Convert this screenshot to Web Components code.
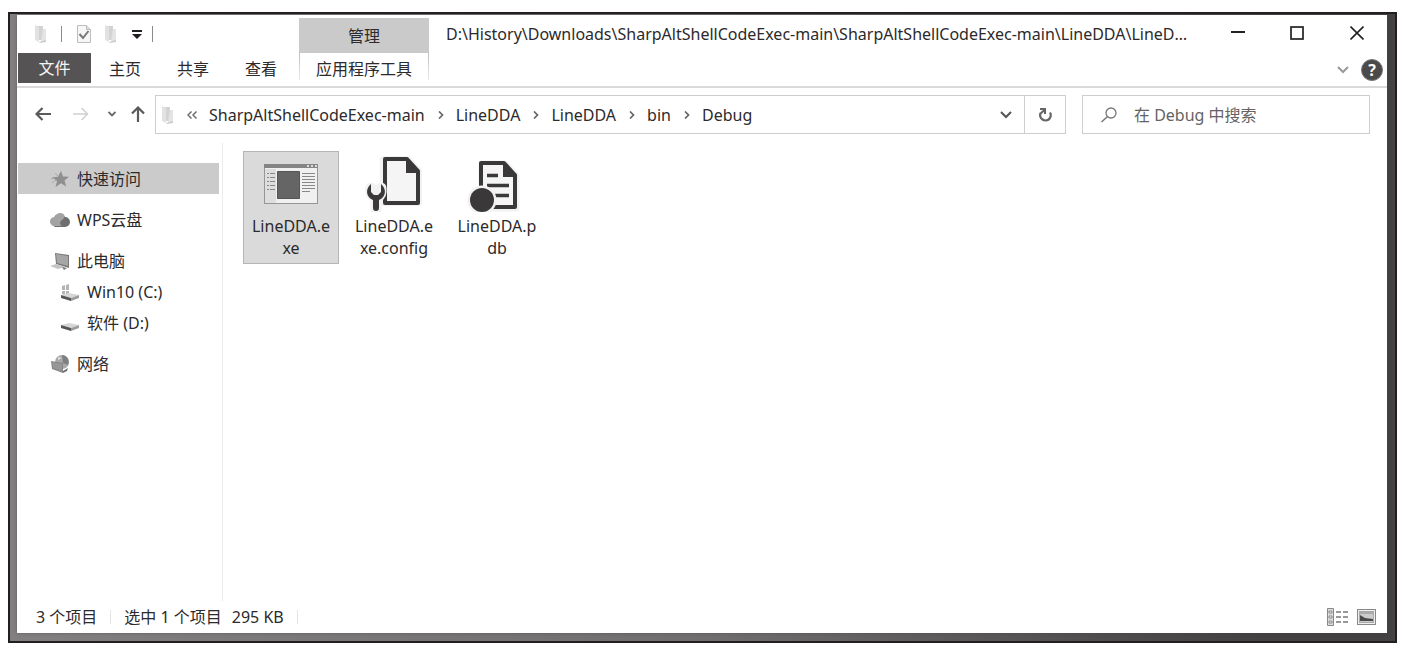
<!DOCTYPE html>
<html lang="zh-CN">
<head>
<meta charset="utf-8">
<title>Debug</title>
<style>
  html { background: #fff; }
  body {
    margin: 0; padding: 12px 7px 16px 8px; box-sizing: border-box; min-height: 100vh;
    display: flex; flex-direction: column;
    font: 16px/22px "Noto Sans", "Noto Sans CJK SC", sans-serif; color: #2c2a2b;
  }
</style>
</head>
<body>
<explorer-window>
  <title-bar slot="title" context="管理">D:\History\Downloads\SharpAltShellCodeExec-main\SharpAltShellCodeExec-main\LineDDA\LineDDA\bin\Debug</title-bar>
  <ribbon-tabs slot="ribbon"></ribbon-tabs>
  <address-bar slot="address"></address-bar>
  <nav-pane slot="nav">
    <nav-item icon="star" selected>快速访问</nav-item>
    <nav-item icon="cloud">WPS云盘</nav-item>
    <nav-item icon="pc">此电脑</nav-item>
    <nav-item icon="windrive" child>Win10 (C:)</nav-item>
    <nav-item icon="drive" child>软件 (D:)</nav-item>
    <nav-item icon="net">网络</nav-item>
  </nav-pane>
  <file-grid slot="files">
    <file-tile icon="exe" selected>LineDDA.exe</file-tile>
    <file-tile icon="config">LineDDA.exe.config</file-tile>
    <file-tile icon="pdb">LineDDA.pdb</file-tile>
  </file-grid>
  <status-bar slot="status"></status-bar>
</explorer-window>

<script>
const BASE = `
  *, *::before, *::after { box-sizing: border-box; }
  button, a, input { font: inherit; color: inherit; border: 0; padding: 0; margin: 0; background: none; text-decoration: none; border-radius: 0; }
  button, a { display: flex; align-items: center; justify-content: center; }
  svg { display: block; flex: none; }
`;

const ICONS = {
  folder: `<svg width="14" height="20" viewBox="0 0 14 20"><path d="M2 2h7v14H2z" fill="#d3d3d3"/><path d="M9 5h3v12H7z" fill="#e4e4e4"/><path d="M1 1l4 2v15l-4-2z" fill="#e2e2e2"/><path d="M5 18l7-2v2l-6 1z" fill="#ccc"/></svg>`,
  check: `<svg width="16" height="20" viewBox="0 0 16 20"><path d="M1.500 1.500h9l4 4v13h-13z" fill="#f6f6f6" stroke="#bdbdbd"/><path d="M10.500 1.500v4h4" fill="#ddd" stroke="#bdbdbd"/><path d="M3.500 10l3.500 4 5.500-7" fill="none" stroke="#777" stroke-width="2"/></svg>`,
  more: `<svg width="10" height="10" viewBox="0 0 10 10"><path d="M0 1h10v2H0zM0 5h10L5 10z" fill="#231f20"/></svg>`,
  min: `<svg width="14" height="14" viewBox="0 0 14 14"><path d="M0 6h14" stroke="#222" stroke-width="2"/></svg>`,
  max: `<svg width="14" height="14" viewBox="0 0 14 14"><rect x="1" y="1" width="12" height="12" fill="none" stroke="#222" stroke-width="1.700"/></svg>`,
  close: `<svg width="14" height="14" viewBox="0 0 14 14"><path d="M.5.5l13 13M13.500.5l-13 13" stroke="#222" stroke-width="1.600"/></svg>`,
  down: `<svg width="12" height="8" viewBox="0 0 12 8"><path d="M1 1l5 5 5-5" fill="none" stroke="currentColor" stroke-width="2"/></svg>`,
  tiny: `<svg width="8" height="6" viewBox="0 0 8 6"><path d="M.5 1L4 4.500 7.500 1" fill="none" stroke="#666" stroke-width="1.800"/></svg>`,
  back: `<svg width="16" height="14" viewBox="0 0 16 14"><path d="M7.500 1l-6 6 6 6M1.500 7H16" fill="none" stroke="#5b595a" stroke-width="2.200"/></svg>`,
  fwd: `<svg width="16" height="14" viewBox="0 0 16 14"><path d="M8.500 1l6 6-6 6M14.500 7H0" fill="none" stroke="#cfcfcf" stroke-width="1.500"/></svg>`,
  up: `<svg width="14" height="16" viewBox="0 0 14 16"><path d="M1 7.500l6-6 6 6M7 1.500V16" fill="none" stroke="#5b595a" stroke-width="2.200"/></svg>`,
  right: `<svg width="6" height="8" viewBox="0 0 6 8"><path d="M1 .5L4.500 4 1 7.500" fill="none" stroke="#666" stroke-width="1.700"/></svg>`,
  laquo: `<svg width="10" height="8" viewBox="0 0 10 8"><path d="M4.500 .5L1 4l3.500 3.500M9.500 .5L6 4l3.500 3.500" fill="none" stroke="#666" stroke-width="1.400"/></svg>`,
  refresh: `<svg width="14" height="16" viewBox="0 0 14 16"><path d="M12 5.500A5.300 5.300 0 1 1 2.600 6" fill="none" stroke="#666" stroke-width="2.200"/><path d="M2 2h5v5M7 2.500L2.500 6.500" fill="none" stroke="#666" stroke-width="2"/></svg>`,
  search: `<svg width="18" height="18" viewBox="0 0 18 18"><circle cx="11" cy="7" r="5" fill="none" stroke="#777" stroke-width="1.300"/><path d="M7.300 10.700L1.500 16" stroke="#777" stroke-width="1.500"/></svg>`,
  star: `<svg width="20" height="20" viewBox="0 0 20 20"><path d="M11 2l2 5.500 6 .2-4.500 3.800 1.700 6L11 14.200 5.500 18l1.600-6L2 8.200l6-.4z" fill="#8f8f8f"/><path d="M2 14l4-3M1 10l4-1M5 4l3 3" stroke="#aaa"/></svg>`,
  cloud: `<svg width="20" height="20" viewBox="0 0 20 20"><path d="M5 17a5 5 0 0 1-1-9 6 6 0 0 1 11-1 5 5 0 0 1 0 10z" fill="#6f6f6f"/><path d="M4 16a4.500 4.500 0 0 1 1-9 6 6 0 0 1 6-4c5 1 4 5 1 7s-2 5 0 6z" fill="#a3a3a3"/></svg>`,
  pc: `<svg width="20" height="20" viewBox="0 0 20 20"><path d="M5 2l14 2v13L6 13z" fill="#777"/><path d="M6 3l12 2v10L7 12z" fill="#a6a6a6"/><path d="M0 15l6-2 9 3-7 2z" fill="#c4c4c4"/><path d="M12 16l5 1-3 2z" fill="#777"/></svg>`,
  windrive: `<svg width="20" height="20" viewBox="0 0 20 20"><path d="M2 4l3-1v5H2zM6 3l3-1v6H6zM2 9h3v4l-3-1zM6 9h3v4H6z" fill="#b4b4b4"/><path d="M1 13l8-2 10 2-8 3z" fill="#d6d6d6"/><path d="M1 13l10 3v3L1 16z" fill="#555"/><path d="M11 16l8-3v3l-8 3z" fill="#9c9c9c"/></svg>`,
  drive: `<svg width="20" height="20" viewBox="0 0 20 20"><path d="M1 12l8-2 10 2-8 3z" fill="#d6d6d6"/><path d="M1 12l10 3v3L1 15z" fill="#555"/><path d="M11 15l8-3v3l-8 3z" fill="#9c9c9c"/></svg>`,
  net: `<svg width="20" height="20" viewBox="0 0 20 20"><circle cx="12" cy="8" r="7" fill="#a8a8a8"/><path d="M12 1a7 7 0 0 1 6 10l-5-2z" fill="#808080"/><path d="M8 3l4 1-4 2z" fill="#dedede"/><path d="M1 7l12 2v10L2 15z" fill="#858585"/><path d="M2 8l10 2v7l-9-3z" fill="#979797"/><path d="M13 17l5-3-1 3-4 2z" fill="#6f6f6f"/></svg>`,
  exe: `<svg width="60" height="60" viewBox="0 0 60 60"><rect x="3.500" y="12.500" width="53" height="39" fill="#f0f0f0" stroke="#969696"/><path d="M3 12h54v4H3z" fill="#858585"/><path d="M46 13h2v2h-2zM50 13h2v2h-2zM54 13h2v2h-2z" fill="#ddd"/><path d="M4 17h11v34H4z" fill="#dedede"/><path d="M6 21.500h8M6 25.500h8M6 29.500h8M6 33.500h8M6 37.500h8" stroke="#888" stroke-dasharray="2 1 5"/><path d="M16.500 19.500h22v27h-22z" fill="#656565" stroke="#555"/><path d="M41 21.500h13M41 24.500h13M41 27.500h13M41 30.500h13M41 33.500h13M41 36.500h13M41 39.500h8" stroke="#888"/></svg>`,
  config: `<svg width="60" height="60" viewBox="0 0 60 60"><path d="M19 7h25l11 12v32H19z" fill="#f2f2f2" stroke="#f2f2f2" stroke-width="6" stroke-linejoin="round"/><path d="M21 7h22l11 12v32H21z" fill="#f5f5f5" stroke="#3a3839" stroke-width="4" stroke-linejoin="round"/><path d="M42 6l14 15H42z" fill="#3a3839"/><path d="M7 36v4a5 5 0 0 0 10 0v-4M12 46v12" fill="none" stroke="#f2f2f2" stroke-width="11" stroke-linecap="round"/><path d="M7 32c-6 5-5 13 2 16v8a3 3 0 0 0 6 0v-8c7-3 8-11 2-16v8l-3 3h-4l-3-3z" fill="#3a3839"/></svg>`,
  pdb: `<svg width="60" height="60" viewBox="0 0 60 60"><path d="M15 12h23l11 12v32H15z" fill="#f2f2f2" stroke="#f2f2f2" stroke-width="7" stroke-linejoin="round"/><path d="M14 11h23l11 12v32H14z" fill="#f5f5f5" stroke="#3a3839" stroke-width="4" stroke-linejoin="round"/><path d="M36 10l14 15H36z" fill="#3a3839"/><path d="M20 23.500h11M20 33.500h22M28 43.500h14" stroke="#3a3839" stroke-width="3.500"/><circle cx="15" cy="48" r="14.500" fill="#f2f2f2"/><circle cx="15" cy="48" r="12" fill="#3a3839"/></svg>`,
  details: `<svg width="22" height="18" viewBox="0 0 22 18"><path d="M.5.500h6v17h-6z" fill="#ddd" stroke="#888"/><path d="M2 3h3v2H2zM2 8h3v2H2zM2 13h3v2H2z" fill="#fff" stroke="#888"/><path d="M9 4h5M16 4h5M9 9h5M16 9h5M9 14h5M16 14h5" stroke="#777" stroke-width="1.500"/></svg>`,
  thumbs: `<svg width="19" height="16" viewBox="0 0 19 16"><rect x=".5" y=".5" width="18" height="15" fill="#eee" stroke="#888"/><rect x="2.500" y="2.500" width="14" height="11" fill="#ccc" stroke="#aaa"/><path d="M3 6l5 3 8 1v2H3z" fill="#4a4a4a"/><path d="M3 4h13" stroke="#888"/></svg>`
};

function define(name, render) {
  customElements.define(name, class extends HTMLElement {
    constructor() { super(); this.attachShadow({ mode: "open" }); }
    connectedCallback() {
      const t = document.createElement("template");
      t.innerHTML = render(this);
      this.shadowRoot.replaceChildren(t.content.cloneNode(true));
    }
  });
}

define("explorer-window", () => `<style>${BASE}
  :host { display: flex; flex-direction: column; flex: 1; box-sizing: border-box; border: 2px solid #231f20;
    padding: 1px 8px 8px 7px; background: linear-gradient(90deg, #827f80, #716e6f 50%, #434142 90%); }
  .win { flex: 1; display: flex; flex-direction: column; background: #fff; box-shadow: 0 0 3px #4448; }
  .main { flex: 1; display: flex; padding-top: 4px; }
  ::slotted([slot=files]) { flex: 1; }
</style>
<div class="win">
  <slot name="title"></slot><slot name="ribbon"></slot><slot name="address"></slot>
  <div class="main"><slot name="nav"></slot><slot name="files"></slot></div>
  <slot name="status"></slot>
</div>`);

define("title-bar", el => `<style>${BASE}
  :host { display: flex; height: 38px; align-items: center; }
  .quick { width: 282px; display: flex; align-items: center; padding-left: 17px; }
  .quick button { height: 24px; }
  .quick i { width: 1px; height: 16px; background: #8a8a8a; }
  .quick .a { margin: 0 14px 0 13px; } .quick .b { margin-right: 12px; } .quick .c { margin: 0 10px 0 14px; }
  .ctx { width: 130px; align-self: stretch; margin-top: 3px; background: #cacaca; display: flex; align-items: center; justify-content: center; }
  .path { width: 748px; margin-left: 17px; overflow: hidden; white-space: nowrap; text-overflow: ellipsis; }
  .ctl { margin-left: auto; display: flex; }
  .ctl button { width: 59px; height: 38px; padding-bottom: 2px; }
  .ctl button:last-child { width: 61px; }
</style>
<div class="quick">
  <button aria-label="属性">${ICONS.folder}</button><i class="a"></i>
  <button class="b" aria-label="选择">${ICONS.check}</button>
  <button aria-label="新建文件夹">${ICONS.folder}</button>
  <button class="c" aria-label="自定义">${ICONS.more}</button><i></i>
</div>
<div class="ctx">${el.getAttribute("context")}</div>
<div class="path"><slot></slot></div>
<div class="ctl"><button aria-label="最小化">${ICONS.min}</button><button aria-label="最大化">${ICONS.max}</button><button aria-label="关闭">${ICONS.close}</button></div>`);

define("ribbon-tabs", () => `<style>${BASE}
  :host { display: flex; height: 35px; border-bottom: 2px solid #dadada; box-sizing: border-box; align-items: flex-start; }
  button { width: 68px; height: 32px; }
  .file { width: 73px; height: 30px; margin-left: 1px; background: #555354; color: #f4f4f4; }
  .ctx { width: 130px; margin-left: 4px; height: 27px; padding-top: 4px; border: solid; border-width: 0 1px; border-image: linear-gradient(#bbb, #eee) 1; }
  .end { margin-left: auto; display: flex; align-items: center; height: 34px; gap: 12px; padding-right: 4px; color: #999; }
  .help { width: 22px; height: 22px; border-radius: 50%; background: #4b494a; color: #fff; font-weight: 700; border: 1px solid #777; }
  .end button:first-child { width: 12px; }
</style>
<button class="file">文件</button><button>主页</button><button>共享</button><button>查看</button><button class="ctx">应用程序工具</button>
<div class="end"><button aria-label="展开功能区">${ICONS.down}</button><button class="help" aria-label="帮助">?</button></div>`);

define("address-bar", () => `<style>${BASE}
  :host { display: flex; padding: 7px 17px 5px 7px; }
  button { height: 38px; }
  .n { width: 38px; } .t { width: 24px; } .u { width: 28px; margin-right: 3px; }
  .box { flex: 1; display: flex; align-items: center; border: 1px solid #cecece; height: 39px; min-width: 0; padding-left: 5px; }
  .box .more { width: 34px; }
  nav { display: flex; align-items: center; }
  nav svg { margin: 0 12px 0 13px; }
  .drop { margin-left: auto; width: 36px; color: #555; }
  .refresh { width: 41px; height: 37px; border-left: 1px solid #cecece; }
  .search { width: 288px; height: 39px; margin-left: 16px; border: 1px solid #cecece; display: flex; align-items: center; padding-left: 17px; gap: 16px; }
  input { flex: 1; min-width: 0; outline: 0; } input::placeholder { color: #656364; opacity: 1; }
</style>
<button class="n" aria-label="返回">${ICONS.back}</button><button class="n" aria-label="前进">${ICONS.fwd}</button>
<button class="t" aria-label="最近">${ICONS.tiny}</button><button class="u" aria-label="上移">${ICONS.up}</button>
<div class="box">${ICONS.folder}<button class="more" aria-label="更多">${ICONS.laquo}</button>
  <nav>${["SharpAltShellCodeExec-main", "LineDDA", "LineDDA", "bin", "Debug"].map(c => `<a href="#">${c}</a>`).join(ICONS.right)}</nav>
  <button class="drop" aria-label="历史">${ICONS.down}</button><button class="refresh" aria-label="刷新">${ICONS.refresh}</button>
</div>
<label class="search">${ICONS.search}<input type="search" placeholder="在 Debug 中搜索" aria-label="搜索"></label>`);

define("nav-pane", () => `<style>
  :host { display: flex; flex-direction: column; width: 206px; padding: 20px 3px 0 1px; box-sizing: border-box; border-right: 1px solid #ececec; }
</style><slot></slot>`);

define("nav-item", el => `<style>${BASE}
  :host { display: block; margin-bottom: 10px; }
  :host([icon=pc]), :host([icon=windrive]) { margin-bottom: 0; }
  a { height: 31px; justify-content: flex-start; padding-left: 32px; gap: 7px; }
  :host([child]) a { padding-left: 42px; }
  :host([selected]) a { background: #cbcbcb; }
</style><a href="#">${ICONS[el.getAttribute("icon")]}<slot></slot></a>`);

define("file-grid", () => `<style>
  :host { display: flex; flex-wrap: wrap; align-content: flex-start; gap: 7px; padding: 8px 20px; }
</style><slot></slot>`);

define("file-tile", el => `<style>${BASE}
  :host { display: block; width: 96px; }
  button { width: 100%; height: 113px; flex-direction: column; justify-content: flex-start; padding: 0 7px; border: 1px solid transparent; gap: 3px; }
  span { display: block; width: 100%; text-align: center; word-break: break-all; }
  :host([selected]) button { background: #dadada; border-color: #b5b5b5; }
</style><button>${ICONS[el.getAttribute("icon")]}<span><slot></slot></span></button>`);

define("status-bar", () => `<style>${BASE}
  :host { display: flex; align-items: center; height: 32px; padding: 0 11px 0 19px; }
  i { width: 1px; height: 14px; background: #e4e4e4; margin: 0 13px; }
  .size { margin-left: 10px; }
  .views { margin-left: auto; display: flex; align-items: center; gap: 8px; }
</style>
<span>3 个项目</span><i></i><span>选中 1 个项目</span><span class="size">295 KB</span><i></i>
<div class="views"><button aria-label="详细信息">${ICONS.details}</button><button aria-label="大图标">${ICONS.thumbs}</button></div>`);
</script>
</body>
</html>
